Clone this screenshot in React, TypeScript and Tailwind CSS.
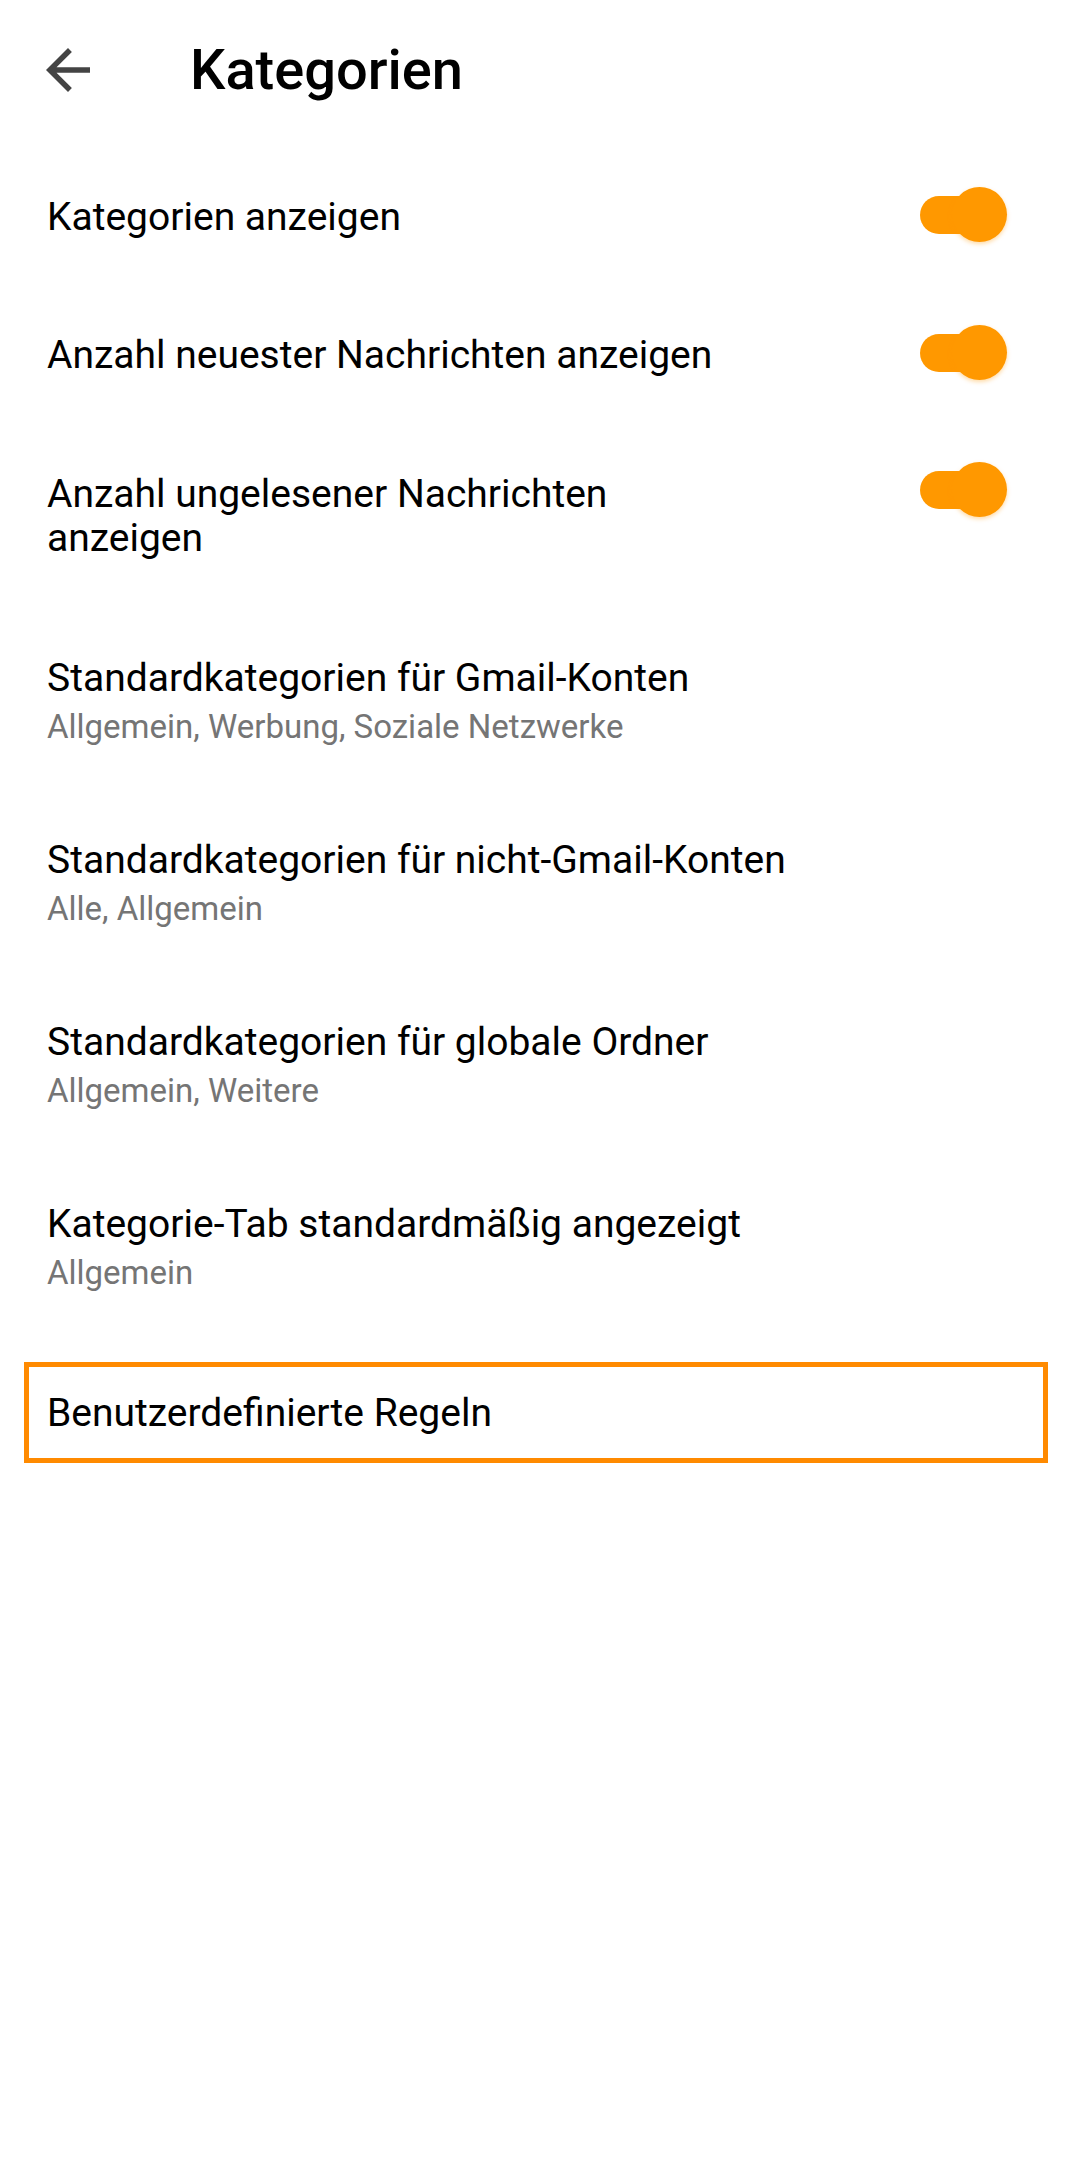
import React from "react";

function Toggle() {
  return (
    <div className="relative w-[87px] h-[55px] shrink-0">
      <div className="absolute left-0 top-[9px] w-[80px] h-[38px] rounded-full bg-[#ff9800]" />
      <div className="absolute right-0 top-0 w-[55px] h-[55px] rounded-full bg-[#ff9800] shadow-[0_2px_4px_rgba(255,152,0,0.35)]" />
    </div>
  );
}

function TwoLine({ title, sub }: { title: string; sub: string }) {
  return (
    <div className="px-[47px] py-[44px]">
      <div className="text-[39px] leading-[44px] text-[#000]">{title}</div>
      <div className="mt-[4px] text-[33px] leading-[46px] text-[#757575]">{sub}</div>
    </div>
  );
}

export default function App() {
  return (
    <div className="w-[1072px] min-h-[2180px] bg-white" style={{ fontFamily: "Roboto, 'Noto Sans', sans-serif" }}>
      <div className="h-[140px] flex items-center">
        <div className="w-[190px] pl-[35px] flex items-center">
          <svg width="66" height="66" viewBox="0 0 24 24">
            <path fill="#444444" d="M20 11H7.83l5.59-5.59L12 4l-8 8 8 8 1.41-1.41L7.83 13H20v-2z" />
          </svg>
        </div>
        <div className="text-[56px] font-medium text-[#000] leading-none">Kategorien</div>
      </div>

      <div className="h-[154px] flex items-center justify-between pl-[47px] pr-[65px]">
        <div className="text-[39px] leading-[44px] text-[#000]">Kategorien anzeigen</div>
        <div className="mb-[6px]">
          <Toggle />
        </div>
      </div>
      <div className="h-[122px] flex items-center justify-between pl-[47px] pr-[65px]">
        <div className="text-[39px] leading-[44px] text-[#000]">Anzahl neuester Nachrichten anzeigen</div>
        <div className="mb-[6px]">
          <Toggle />
        </div>
      </div>
      <div className="h-[196px] pt-[56px] flex items-start justify-between pl-[47px] pr-[65px]">
        <div className="w-[640px] text-[39px] leading-[44px] text-[#000]">Anzahl ungelesener Nachrichten anzeigen</div>
        <div className="h-[44px] -mt-[5px] flex items-center">
          <Toggle />
        </div>
      </div>

      <TwoLine title="Standardkategorien für Gmail-Konten" sub="Allgemein, Werbung, Soziale Netzwerke" />
      <TwoLine title="Standardkategorien für nicht-Gmail-Konten" sub="Alle, Allgemein" />
      <TwoLine title="Standardkategorien für globale Ordner" sub="Allgemein, Weitere" />
      <TwoLine title="Kategorie-Tab standardmäßig angezeigt" sub="Allgemein" />

      <div className="mt-[22px] mx-[24px] h-[101px] border-[5px] border-[#ff8a00] flex items-center pl-[18px]">
        <div className="text-[39px] leading-[44px] text-[#000]">Benutzerdefinierte Regeln</div>
      </div>
    </div>
  );
}
